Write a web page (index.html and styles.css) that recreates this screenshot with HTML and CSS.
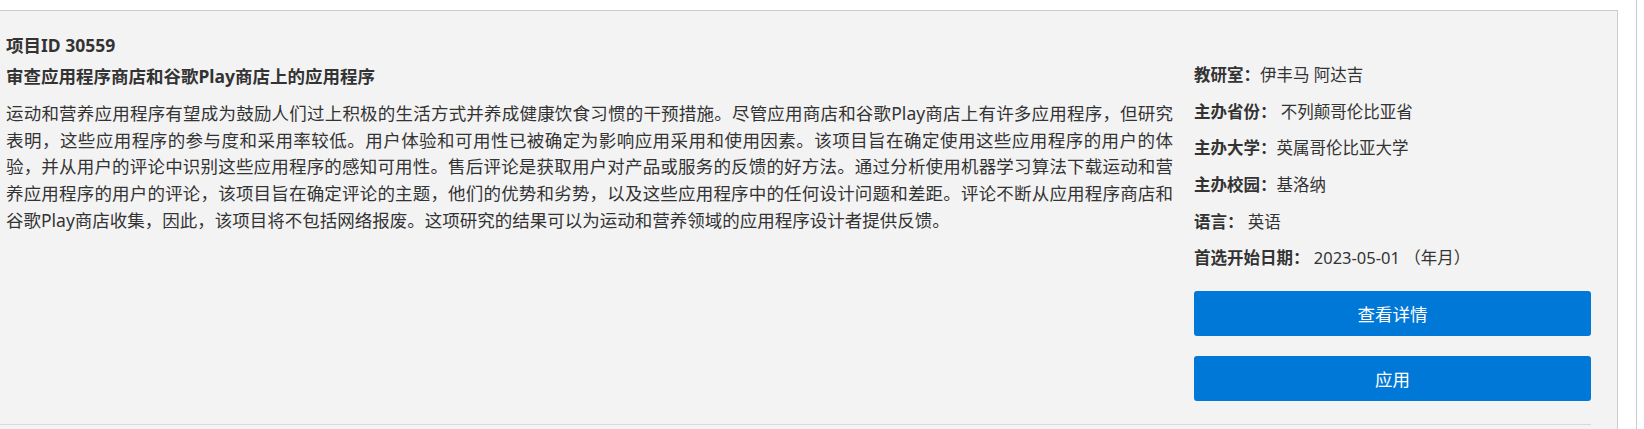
FILE: index.html
```html
<!DOCTYPE html>
<html lang="zh-CN">
<head>
<meta charset="utf-8">
<title>项目ID 30559</title>
<link rel="stylesheet" href="styles.css">
</head>
<body>
<div class="page">
  <div class="panel">
    <div class="item">
      <div class="main">
        <div class="pid">项目ID 30559</div>
        <h2 class="title">审查应用程序商店和谷歌Play商店上的应用程序</h2>
        <p class="desc">运动和营养应用程序有望成为鼓励人们过上积极的生活方式并养成健康饮食习惯的干预措施。尽管应用商店和谷歌Play商店上有许多应用程序，但研究表明，这些应用程序的参与度和采用率较低。用户体验和可用性已被确定为影响应用采用和使用因素。该项目旨在确定使用这些应用程序的用户的体验，并从用户的评论中识别这些应用程序的感知可用性。售后评论是获取用户对产品或服务的反馈的好方法。通过分析使用机器学习算法下载运动和营养应用程序的用户的评论，该项目旨在确定评论的主题，他们的优势和劣势，以及这些应用程序中的任何设计问题和差距。评论不断从应用程序商店和谷歌Play商店收集，因此，该项目将不包括网络报废。这项研究的结果可以为运动和营养领域的应用程序设计者提供反馈。</p>
      </div>
      <div class="side">
        <div class="row"><span class="lbl">教研室：</span>伊丰马 阿达吉</div>
        <div class="row"><span class="lbl">主办省份：</span> 不列颠哥伦比亚省</div>
        <div class="row"><span class="lbl">主办大学：</span>英属哥伦比亚大学</div>
        <div class="row"><span class="lbl">主办校园：</span>基洛纳</div>
        <div class="row"><span class="lbl">语言：</span> 英语</div>
        <div class="row"><span class="lbl">首选开始日期：</span> 2023-05-01 （年月）</div>
        <div class="actions">
          <a class="btn" href="#">查看详情</a>
          <a class="btn" href="#">应用</a>
        </div>
      </div>
    </div>
  </div>
  <div class="edge"></div>
</div>
</body>
</html>
```

FILE: styles.css
```css
html, body {
  margin: 0;
  padding: 0;
  background: #ffffff;
}

body {
  font-family: "Segoe UI", "Noto Sans", "Noto Sans CJK SC", sans-serif;
  color: #333333;
  overflow: hidden;
}

.page {
  display: flex;
  align-items: stretch;
  height: 100vh;
}

.panel {
  flex: none;
  width: 1591px;
  margin-top: 10px;
  padding-right: 26px;
  background: #f3f3f3;
  border-top: 1px solid #cccccc;
  border-right: 1px solid #cccccc;
}

.edge {
  flex: none;
  margin-left: 18px;
  width: 0;
  border-left: 1px solid #cccccc;
}

.item {
  display: flex;
  gap: 21px;
  padding: 20px 0 23px 6px;
  border-bottom: 1px solid #d9d9d9;
}

.main {
  flex: none;
  width: 1167px;
}

.pid {
  font-size: 17.5px;
  font-weight: 700;
  line-height: 28px;
}

.title {
  margin: 3px 0 0;
  font-size: 17.5px;
  font-weight: 700;
  line-height: 28px;
}

.desc {
  margin: 10px 0 0;
  font-size: 17.5px;
  line-height: 26.67px;
  text-align: justify;
}

.side {
  flex: none;
  width: 397px;
  padding-top: 26px;
  font-size: 16.5px;
}

.row {
  line-height: 36.67px;
  white-space: nowrap;
}

.lbl {
  font-weight: 700;
}

.actions {
  display: flex;
  flex-direction: column;
  gap: 20px;
  margin-top: 14px;
}

.btn {
  display: flex;
  align-items: center;
  justify-content: center;
  height: 45px;
  border-radius: 3px;
  background: #0078d7;
  color: #ffffff;
  font-size: 17.5px;
  text-decoration: none;
}
```
